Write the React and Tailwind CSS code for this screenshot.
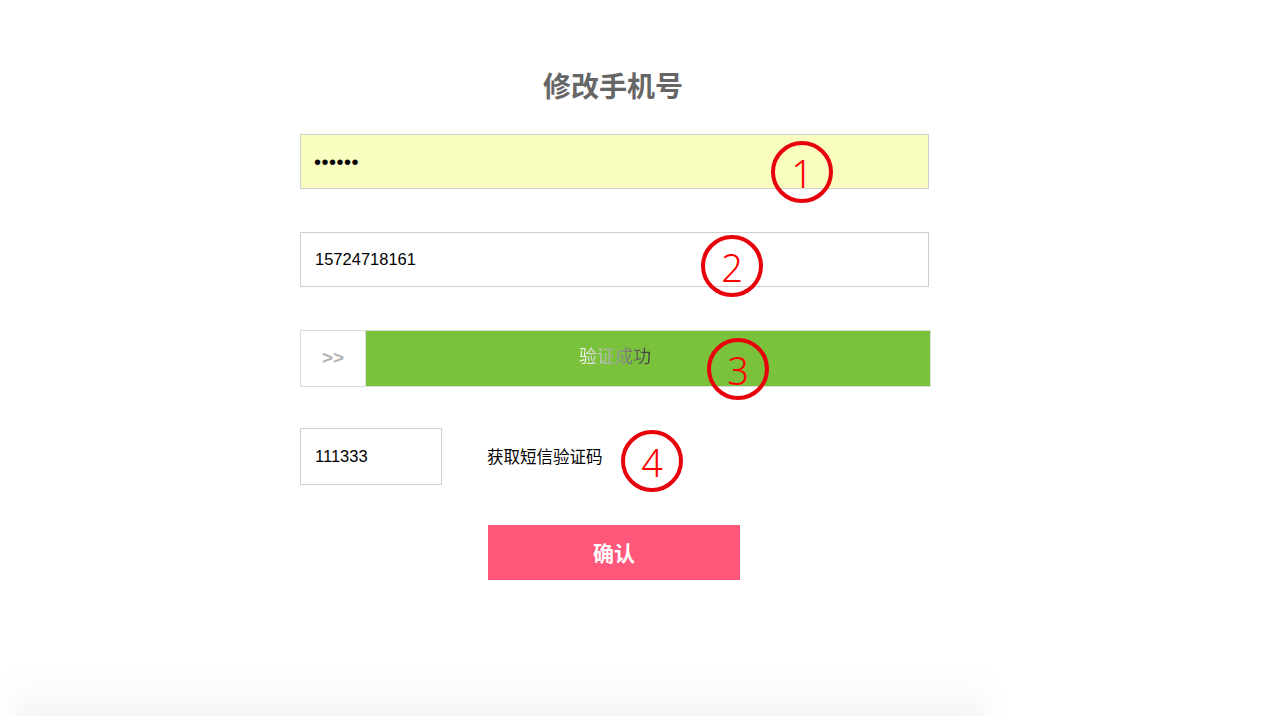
import React from "react";

function Mark({ n, className }) {
  return (
    <div
      className={
        "absolute flex h-[62px] w-[62px] items-center justify-center rounded-full border-4 border-[#e8000b] text-[38px] font-light leading-none text-[#ff0000] font-['Noto_Sans','Liberation_Sans',sans-serif] " +
        className
      }
    >
      <span className="mt-[2px]">{n}</span>
    </div>
  );
}

export default function App() {
  return (
    <div className="relative h-[716px] w-full overflow-hidden bg-white font-['Liberation_Sans','Noto_Sans_CJK_SC',sans-serif] text-black">
      <div className="ml-[300px] flex w-[631px] flex-col pt-[65px]">
        <h1 className="pr-[5px] text-center text-[28px] font-bold leading-[40px] text-[#666] font-['Noto_Sans_CJK_SC',sans-serif]">
          修改手机号
        </h1>

        <div className="mt-[29px] flex h-[55px] w-[629px] items-center border border-[#cfcfcf] bg-[#fafdc0] pl-[13px]">
          <span className="text-[20px] leading-none tracking-[0.5px]">••••••</span>
        </div>

        <div className="mt-[43px] flex h-[55px] w-[629px] items-center border border-[#cfcfcf] bg-white pl-[14px]">
          <span className="text-[16.5px]">15724718161</span>
        </div>

        <div className="mt-[43px] flex h-[57px] w-[631px] border border-[#dcdcdc]">
          <div className="flex h-full w-[65px] items-center justify-center border-r border-[#dcdcdc] bg-white text-[19px] font-bold text-[#b5b5b5]">
            &gt;&gt;
          </div>
          <div className="flex flex-1 items-center justify-center bg-[#7ac23b] pr-[66px]">
            <span className="-mt-[2px] bg-gradient-to-r from-[#ffffff] via-[#a0a0a0] to-[#3a3a3a] bg-clip-text text-[18px] text-transparent font-['Liberation_Serif','Noto_Sans_CJK_SC',serif]">
              验证成功
            </span>
          </div>
        </div>

        <div className="mt-[41px] flex items-center">
          <div className="flex h-[57px] w-[142px] items-center border border-[#cfcfcf] pl-[14px]">
            <span className="text-[16.5px]">111333</span>
          </div>
          <span className="ml-[45px] text-[16.5px] font-['Noto_Sans_CJK_SC',sans-serif]">
            获取短信验证码
          </span>
        </div>

        <button className="ml-[188px] mt-[40px] flex h-[55px] w-[252px] items-center justify-center bg-[#ff577a] text-[21px] font-bold text-white font-['Noto_Sans_CJK_SC',sans-serif]">
          确认
        </button>
      </div>

      <Mark n="1" className="left-[771px] top-[141px]" />
      <Mark n="2" className="left-[701px] top-[235px]" />
      <Mark n="3" className="left-[707px] top-[338px]" />
      <Mark n="4" className="left-[621px] top-[430px]" />

      <div className="pointer-events-none absolute bottom-[-24px] left-[15px] h-[64px] w-[970px] bg-gradient-to-b from-transparent to-[#efefef] blur-md" />
    </div>
  );
}
